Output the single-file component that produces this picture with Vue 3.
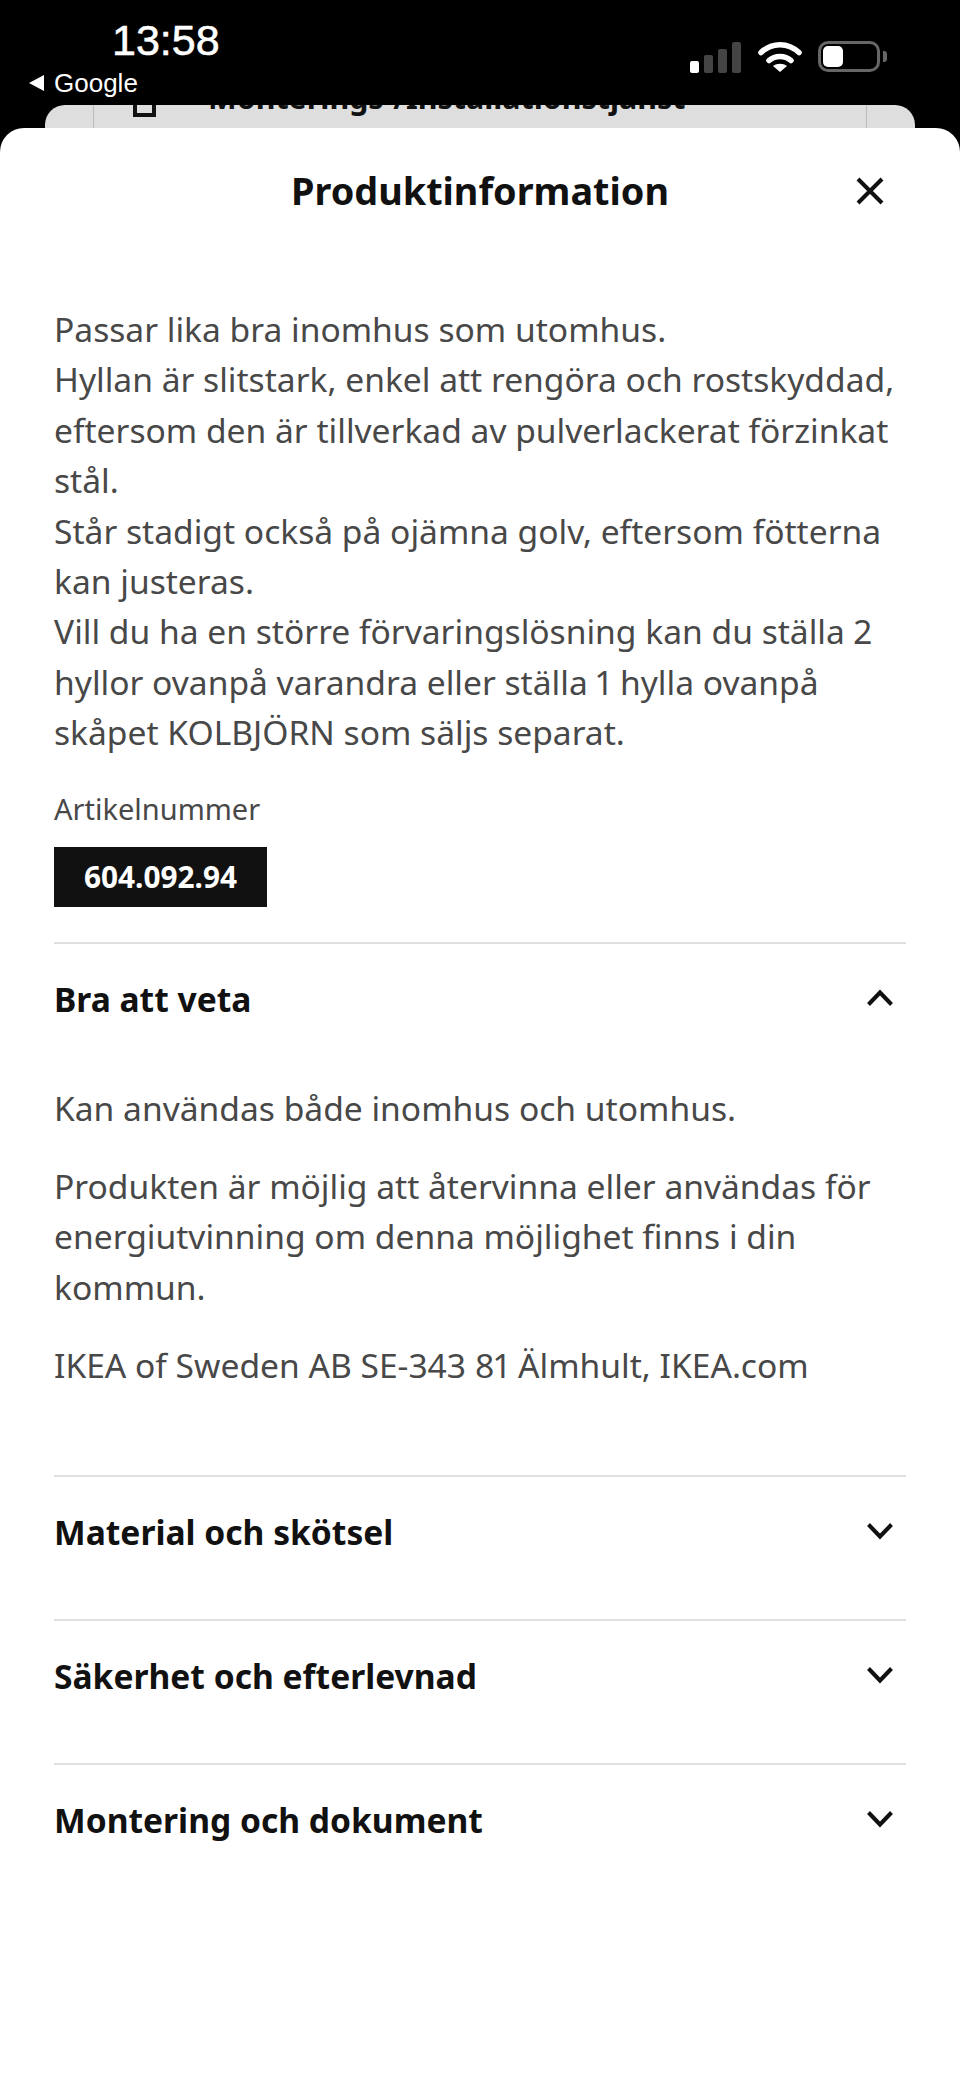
<template>
  <div class="screen">
    <div class="status">
      <div class="status-left">
        <div class="time">13:58</div>
        <div class="back"><span class="back-arrow"></span>Google</div>
      </div>
      <div class="status-right">
        <div class="signal">
          <span class="bar on" style="height: 12px"></span>
          <span class="bar" style="height: 18px"></span>
          <span class="bar" style="height: 24px"></span>
          <span class="bar" style="height: 31px"></span>
        </div>
        <svg class="wifi" width="44" height="32" viewBox="0 0 44 32">
          <path d="M3 11.5C14 1 30 1 41 11.5" fill="none" stroke="#fff" stroke-width="5.5" stroke-linecap="round" />
          <path d="M11 19.5C17 14 27 14 33 19.5" fill="none" stroke="#fff" stroke-width="5.5" stroke-linecap="round" />
          <path d="M22 31L15 25C19 22 25 22 29 25Z" fill="#fff" />
        </svg>
        <div class="battery"><span class="level"></span></div>
        <span class="battery-tip"></span>
      </div>
    </div>

    <div class="behind">
      <div class="behind-inner">
        <span class="behind-icon"></span>
        <span class="behind-text">Monterings-/Installationstjänst</span>
      </div>
    </div>

    <div class="sheet">
      <header class="sheet-head">
        <h1>Produktinformation</h1>
        <svg class="close" width="32" height="32" viewBox="0 0 32 32">
          <path d="M4 4L28 28M28 4L4 28" stroke="#111" stroke-width="4" fill="none" />
        </svg>
      </header>

      <div class="desc">
        <p v-for="line in description" :key="line">{{ line }}</p>
      </div>

      <div class="art-label">Artikelnummer</div>
      <div class="art-number">604.092.94</div>

      <section class="acc open">
        <div class="acc-head">
          <span>Bra att veta</span>
          <svg class="chevron" width="28" height="18" viewBox="0 0 28 18">
            <path d="M2.5 15.5L14 3.5L25.500 15.500" stroke="#111" stroke-width="4" fill="none" />
          </svg>
        </div>
        <div class="acc-body">
          <p>Kan användas både inomhus och utomhus.</p>
          <p>Produkten är möjlig att återvinna eller användas för energiutvinning om denna möjlighet finns i din kommun.</p>
          <p>IKEA of Sweden AB SE-343 81 Älmhult, IKEA.com</p>
        </div>
      </section>

      <section v-for="title in closedSections" :key="title" class="acc closed">
        <div class="acc-head">
          <span>{{ title }}</span>
          <svg class="chevron" width="28" height="18" viewBox="0 0 28 18">
            <path d="M2.500 2.500L14 14.500L25.500 2.500" stroke="#111" stroke-width="4" fill="none" />
          </svg>
        </div>
      </section>
    </div>
  </div>
</template>

<script setup>
const description = [
  'Passar lika bra inomhus som utomhus.',
  'Hyllan är slitstark, enkel att rengöra och rostskyddad, eftersom den är tillverkad av pulverlackerat förzinkat stål.',
  'Står stadigt också på ojämna golv, eftersom fötterna kan justeras.',
  'Vill du ha en större förvaringslösning kan du ställa 2 hyllor ovanpå varandra eller ställa 1 hylla ovanpå skåpet KOLBJÖRN som säljs separat.',
]

const closedSections = ['Material och skötsel', 'Säkerhet och efterlevnad', 'Montering och dokument']
</script>

<style>
html,
body {
  margin: 0;
  background: #000;
}
</style>

<style scoped>
.screen {
  width: 960px;
  height: 2077px;
  background: #000;
  overflow: hidden;
  font-family: "Noto Sans", sans-serif;
  position: relative;
}

.status {
  height: 105px;
  display: flex;
  justify-content: space-between;
  box-sizing: border-box;
  color: #fff;
  font-family: "Liberation Sans", sans-serif;
}

.status-left {
  padding: 16px 0 0 29px;
}

.time {
  font-size: 43px;
  line-height: 48px;
  font-weight: 500;
  margin-left: 83px;
  -webkit-text-stroke: 0.6px #fff;
}

.back {
  display: flex;
  align-items: center;
  font-size: 26px;
  line-height: 36px;
  margin-top: 1px;
}

.back-arrow {
  width: 0;
  height: 0;
  border-style: solid;
  border-width: 8px 15px 8px 0;
  border-color: transparent #fff transparent transparent;
  margin-right: 10px;
}

.status-right {
  display: flex;
  align-items: flex-start;
  padding: 41px 73px 0 0;
}

.signal {
  display: flex;
  align-items: flex-end;
  gap: 5px;
  height: 31px;
  margin-top: 1px;
  margin-right: 17px;
}

.bar {
  width: 9px;
  border-radius: 2px;
  background: #444;
}

.bar.on {
  background: #fff;
}

.wifi {
  margin-right: 16px;
}

.battery {
  width: 62px;
  height: 31px;
  box-sizing: border-box;
  border: 3px solid #666;
  border-radius: 10px;
  padding: 2px;
}

.level {
  display: block;
  width: 20px;
  height: 21px;
  background: #fff;
  border-radius: 5px;
}

.battery-tip {
  width: 4px;
  height: 11px;
  margin: 10px 0 0 3px;
  background: #666;
  border-radius: 0 3px 3px 0;
}

.behind {
  position: absolute;
  top: 105px;
  left: 45px;
  width: 870px;
  height: 60px;
  background: #dedede;
  border-radius: 20px 20px 0 0;
  overflow: hidden;
}

.behind-inner {
  position: absolute;
  left: 48px;
  right: 48px;
  top: -40px;
  height: 100px;
  border: 1px solid #bbb;
  box-sizing: border-box;
}

.behind-icon {
  position: absolute;
  left: 39px;
  top: 30px;
  width: 23px;
  height: 21px;
  box-sizing: border-box;
  border: 4px solid #111;
  border-top-width: 2px;
  border-bottom-width: 4px;
  background: #dedede;
}

.behind-text {
  position: absolute;
  left: 114px;
  top: 10px;
  font-size: 30.4px;
  line-height: 44px;
  font-weight: 700;
  color: #111;
  white-space: nowrap;
}

.sheet {
  position: absolute;
  top: 128px;
  left: 0;
  right: 0;
  bottom: 0;
  background: #fff;
  border-radius: 24px 24px 0 0;
  box-sizing: border-box;
  padding: 0 54px;
}

.sheet-head {
  height: 126px;
  display: flex;
  align-items: center;
  justify-content: center;
  position: relative;
}

h1 {
  margin: 0;
  font-size: 37.8px;
  line-height: 50px;
  font-weight: 700;
  color: #111;
}

.close {
  position: absolute;
  right: 20px;
  top: 47px;
}

.desc {
  margin-top: 50px;
  font-size: 33.6px;
  line-height: 50.4px;
  color: #484848;
  font-variant-numeric: proportional-nums;
}

.desc p {
  margin: 0;
}

.art-label {
  margin-top: 31px;
  font-size: 29px;
  line-height: 40px;
  color: #484848;
}

.art-number {
  margin-top: 18px;
  width: 213px;
  height: 60px;
  background: #111;
  color: #fff;
  font-size: 29.8px;
  font-weight: 700;
  line-height: 60px;
  text-align: center;
}

.acc {
  border-top: 2px solid #dfdfdf;
}

.art-number + .acc {
  margin-top: 35px;
}

.acc-head {
  height: 110px;
  display: flex;
  align-items: center;
  justify-content: space-between;
  font-size: 33.6px;
  font-weight: 700;
  color: #111;
  padding-right: 12px;
}

.acc.closed {
  padding-bottom: 32px;
}

.chevron {
  margin-bottom: 2px;
}

.acc-body {
  padding-top: 29px;
  padding-bottom: 84px;
  font-size: 33.6px;
  line-height: 50.4px;
  color: #484848;
  font-variant-numeric: proportional-nums;
}

.acc-body p {
  margin: 0 0 28px;
}

.acc-body p:last-child {
  margin-bottom: 0;
}
</style>
